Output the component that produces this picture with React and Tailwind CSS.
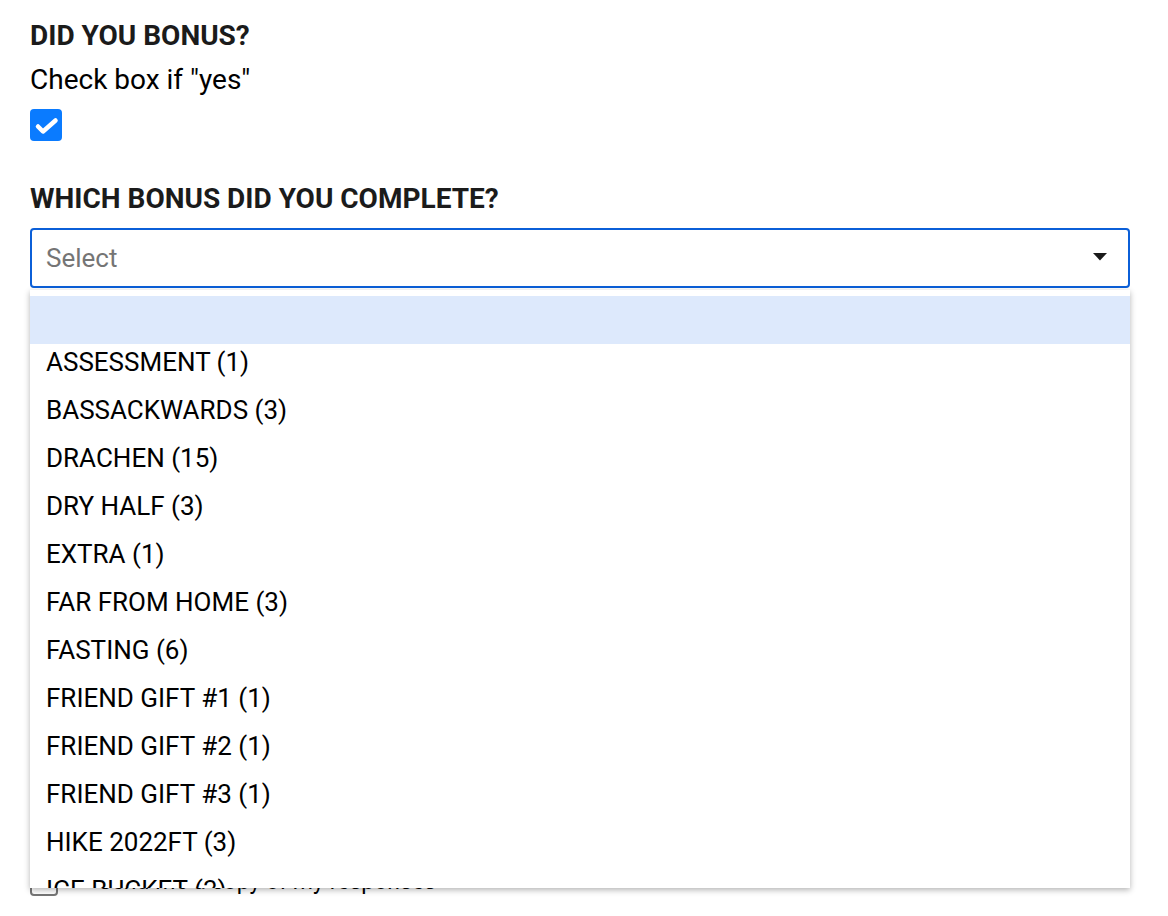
import React from 'react';

const options = [
  'ASSESSMENT (1)',
  'BASSACKWARDS (3)',
  'DRACHEN (15)',
  'DRY HALF (3)',
  'EXTRA (1)',
  'FAR FROM HOME (3)',
  'FASTING (6)',
  'FRIEND GIFT #1 (1)',
  'FRIEND GIFT #2 (1)',
  'FRIEND GIFT #3 (1)',
  'HIKE 2022FT (3)',
  'ICE BUCKET (3)',
];

const App = () => {
  return (
    <div className="min-h-[916px] bg-white pl-[30px] pr-[38px] pt-[20px] text-black" style={{ fontFamily: 'Roboto, "Liberation Sans", sans-serif' }}>
      <h2 className="text-[28px] font-bold text-[#1b1b1b] leading-[32px]">DID YOU BONUS?</h2>
      <p className="mt-[12px] text-[28px] leading-[32px]">Check box if "yes"</p>
      <div className="mt-[13px] w-[32px] h-[32px] rounded-[4px] bg-[#0a7bff]">
        <svg width="32" height="32" viewBox="0 0 32 32" fill="none" stroke="white" strokeWidth="4.5" strokeLinecap="round" strokeLinejoin="round">
          <path d="M8 17.5l5 5L25.5 11.5" />
        </svg>
      </div>

      <h2 className="mt-[42px] text-[28px] font-bold text-[#1b1b1b] leading-[32px]">WHICH BONUS DID YOU COMPLETE?</h2>

      <div className="relative mt-[13px] text-[26px]">
        <div className="h-[60px] border-2 border-[#0b5fd8] rounded-[4px] flex items-center justify-between pl-[14px] pr-[21px]">
          <span className="text-[#757575] leading-[30px]">Select</span>
          <svg width="14" height="8" viewBox="0 0 14 8" className="mb-[2px]">
            <path d="M0 0h14L7 7.5z" fill="#1a1a1a" />
          </svg>
        </div>

        <div className="absolute left-0 right-0 top-[62px] h-[598px] overflow-hidden bg-white pt-[6px] shadow-[0_2px_6px_rgba(0,0,0,0.3)] z-10">
          <div className="h-[48px] bg-[#dde9fc]"></div>
          {options.map((o) => (
            <div key={o} className="h-[48px] pl-[16px] pt-[4px] leading-[28px] whitespace-nowrap">{o}</div>
          ))}
        </div>

        <div className="h-[578px]"></div>
        <div className="flex items-start gap-[40px]">
          <div className="mt-[2px] w-[28px] h-[28px] rounded-[4px] border-2 border-[#767676]"></div>
          <span className="text-[23px] leading-[32px]">Send me a copy of my responses</span>
        </div>
      </div>
    </div>
  );
};

export default App;
